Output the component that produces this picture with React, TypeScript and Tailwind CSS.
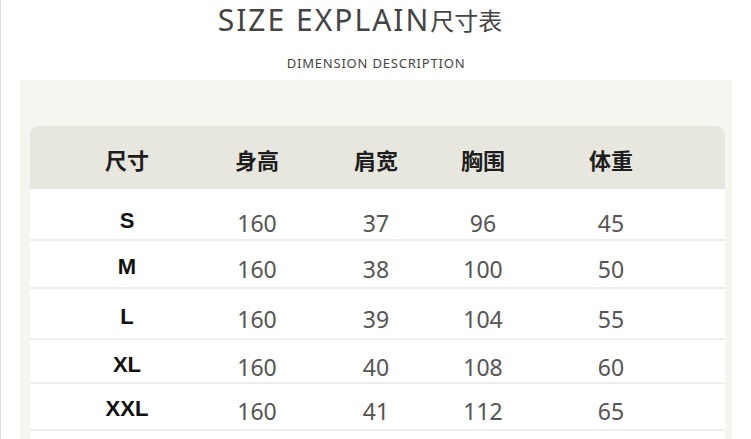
import React from "react";

const rows = [
  { size: "S", height: "160", shoulder: "37", chest: "96", weight: "45", h: "h-[52px]", pad: "pt-[15px]" },
  { size: "M", height: "160", shoulder: "38", chest: "100", weight: "50", h: "h-[48px]", pad: "pt-[9px]" },
  { size: "L", height: "160", shoulder: "39", chest: "104", weight: "55", h: "h-[51px]", pad: "pt-[11px]" },
  { size: "XL", height: "160", shoulder: "40", chest: "108", weight: "60", h: "h-[44px]", pad: "pt-[8px]" },
  { size: "XXL", height: "160", shoulder: "41", chest: "112", weight: "65", h: "h-[47px]", pad: "pt-[8px]" },
];

const headers = ["尺寸", "身高", "肩宽", "胸围", "体重"];

const cols = "grid grid-cols-[194px_66px_172px_42px_214px]";

export default function App() {
  return (
    <div className="w-[751px] h-[439px] overflow-hidden bg-white border-l border-[#dcdcdc] font-['Noto_Sans','Noto_Sans_CJK_SC',sans-serif]">
      {/* Title */}
      <div className="flex justify-center pr-[32px] pt-[2px] h-[42px] leading-[36px] text-[#444]">
        <span className="text-[30px] tracking-[2px]">SIZE EXPLAIN</span>
        <span className="text-[24px] font-['Noto_Sans_CJK_SC',sans-serif]">尺寸表</span>
      </div>
      <div className="flex justify-center pt-[12px] h-[38px] text-[13px] leading-[18px] tracking-[0.8px] text-[#444]">
        DIMENSION DESCRIPTION
      </div>

      {/* Chart panel */}
      <div className="ml-[19px] w-[712px] h-[400px] bg-[#f6f6f1] pt-[46px] pl-[10px] pr-[7px]">
        <div className="rounded-t-[9px] overflow-hidden bg-white h-full">
          <div className={`${cols} h-[63px] items-center pt-[4px] bg-[#e8e7df]`}>
            {headers.map((h) => (
              <div key={h} className="flex justify-center whitespace-nowrap text-[22px] font-semibold text-[#1e1e1e] font-['Noto_Sans_CJK_SC',sans-serif]">
                {h}
              </div>
            ))}
          </div>

          {rows.map((r) => (
            <div key={r.size} className={`${cols} ${r.h} ${r.pad} items-start border-b-2 border-[#efeee8]`}>
              <div className="flex justify-center text-[22px] leading-[33px] font-bold text-[#111] font-['Liberation_Sans',sans-serif]">
                {r.size}
              </div>
              {[r.height, r.shoulder, r.chest, r.weight].map((v, i) => (
                <div key={i} className="flex justify-center pt-[2px] whitespace-nowrap text-[23px] leading-[34.5px] text-[#555]">
                  {v}
                </div>
              ))}
            </div>
          ))}
        </div>
      </div>
    </div>
  );
}
